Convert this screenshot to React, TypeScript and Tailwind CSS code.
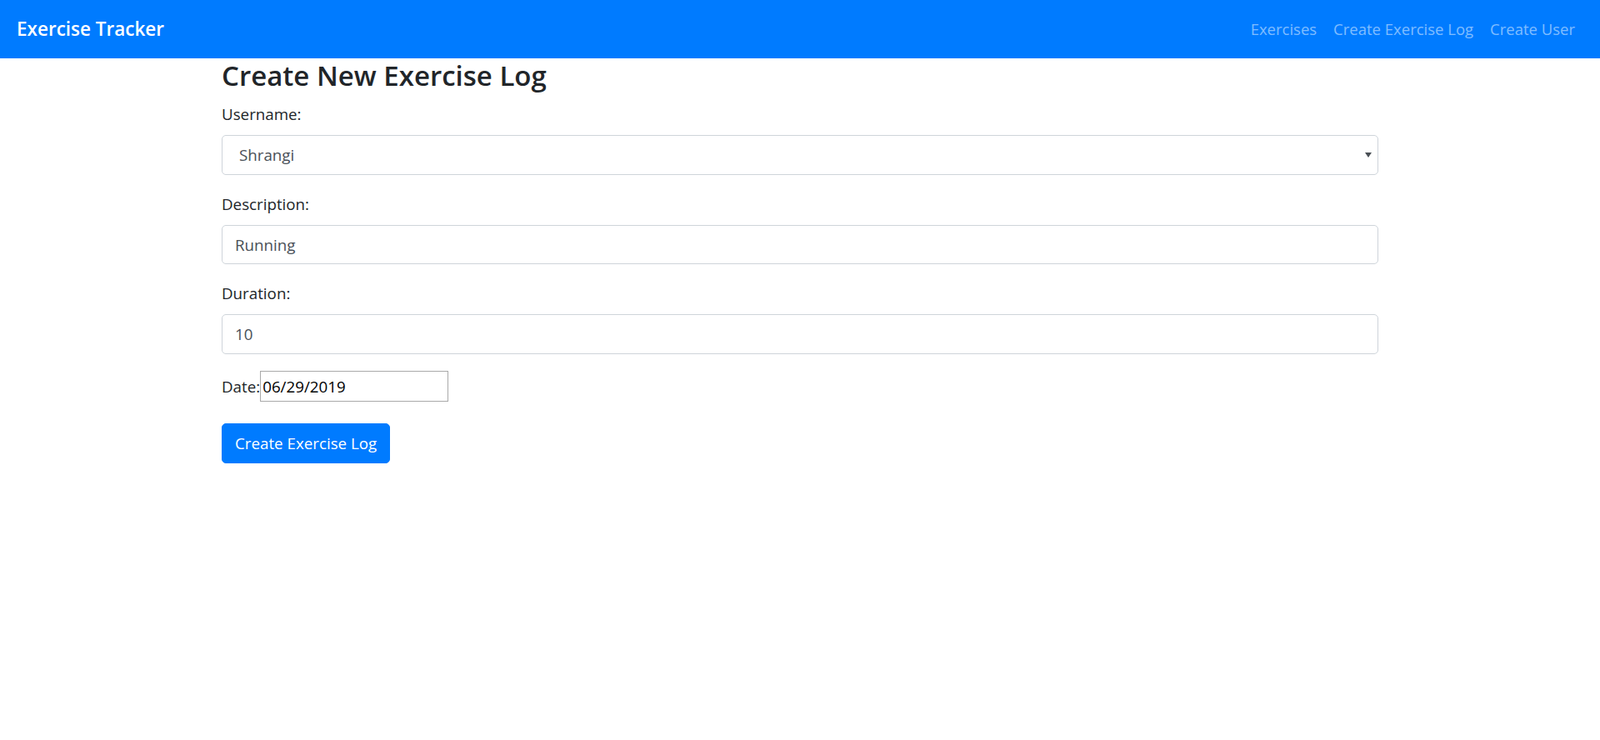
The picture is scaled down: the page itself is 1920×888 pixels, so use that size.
import React, { useState } from "react";

const font = "font-['Open_Sans','Noto_Sans',sans-serif]";

const navLinks = ["Exercises", "Create Exercise Log", "Create User"];

const Navbar: React.FC = () => (
  <nav className="flex items-center h-[70px] px-[20px] py-[10px] bg-[#007bff]">
    <a className="py-[6px] mr-[20px] text-[22.5px] leading-[37.5px] font-semibold text-white whitespace-nowrap">
      Exercise Tracker
    </a>
    <div className="flex items-center ml-auto">
      {navLinks.map(l => (
        <a key={l} className="px-[10px] py-[10px] text-[18.5px] leading-[30px] text-white/50 whitespace-nowrap">
          {l}
        </a>
      ))}
    </div>
  </nav>
);

export default function App() {
  const [user, setUser] = useState("Shrangi");
  const [desc, setDesc] = useState("Running");
  const [dur, setDur] = useState("10");
  const [date, setDate] = useState("06/29/2019");

  const inputCls =
    "block w-full h-[47.5px] px-[15px] py-[7.5px] text-[18.75px] leading-[30px] text-[#495057] bg-white border border-[#ced4da] rounded-[5px] outline-none";
  const labelCls = "block mb-[10px] text-[18.75px] leading-[30px]";

  return (
    <div className={`${font} min-h-screen bg-white text-[#212529]`}>
      <Navbar />

      <div className="w-[1388px] mx-auto">
        <h3 className="text-[33px] leading-[42px] font-semibold mb-[10px]">Create New Exercise Log</h3>

        <form onSubmit={e => e.preventDefault()}>
          {/* Username */}
          <div className="mb-[20px]">
            <label className={labelCls}>Username: </label>
            <div className="relative">
              <select
                value={user}
                onChange={e => setUser(e.target.value)}
                className={`${inputCls} appearance-none pl-[20px]`}
              >
                <option>Shrangi</option>
              </select>
              <svg className="absolute right-[8px] top-[21px] pointer-events-none" width="8" height="6" viewBox="0 0 8 6">
                <path d="M0 0 H8 L4 6 Z" fill="#4a4f55" />
              </svg>
            </div>
          </div>

          {/* Description */}
          <div className="mb-[20px]">
            <label className={labelCls}>Description: </label>
            <input type="text" value={desc} onChange={e => setDesc(e.target.value)} className={inputCls} />
          </div>

          {/* Duration */}
          <div className="mb-[20px]">
            <label className={labelCls}>Duration: </label>
            <input type="text" value={dur} onChange={e => setDur(e.target.value)} className={inputCls} />
          </div>

          {/* Date */}
          <div className="mb-[20px] h-[43.5px] flex items-start">
            <label className="text-[18.75px] leading-[37px]">Date:</label>
            <input
              type="text"
              value={date}
              onChange={e => setDate(e.target.value)}
              className="w-[226px] h-[37px] px-[2px] text-[18.75px] leading-[30px] text-black border border-[#a9a9a9] outline-none"
            />
          </div>

          <button
            type="submit"
            className="h-[47.5px] px-[15px] text-[18.75px] leading-[30px] text-white bg-[#007bff] border border-[#007bff] rounded-[5px]"
          >
            Create Exercise Log
          </button>
        </form>
      </div>
    </div>
  );
}
